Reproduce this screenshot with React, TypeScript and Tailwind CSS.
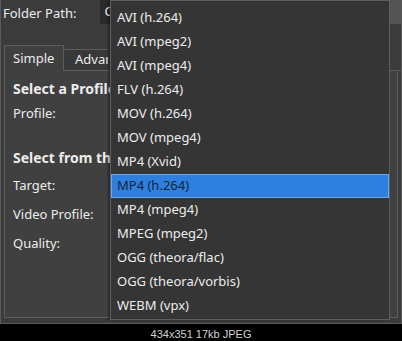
const formats = [
  'AVI (h.264)',
  'AVI (mpeg2)',
  'AVI (mpeg4)',
  'FLV (h.264)',
  'MOV (h.264)',
  'MOV (mpeg4)',
  'MP4 (Xvid)',
  'MP4 (h.264)',
  'MP4 (mpeg4)',
  'MPEG (mpeg2)',
  'OGG (theora/flac)',
  'OGG (theora/vorbis)',
  'WEBM (vpx)',
];

const selected = 'MP4 (h.264)';

export default function App() {
  return (
    <div className="flex h-[341px] w-[402px] flex-col overflow-hidden bg-black font-['Noto_Sans',sans-serif] text-[13px] text-[#ececec]">
      <div className="relative h-[324px] shrink-0 overflow-hidden border-x border-b border-[#5a5a5a] bg-[#3b3b3b]">
        {/* folder row */}
        <div className="flex h-[45px] items-start">
          <span className="ml-[2px] mt-[4px] leading-[18px]">Folder Path:</span>
          <div className="ml-[24px] flex h-[24px] flex-1 items-center bg-[#2a2a2a] pl-[4px]">C</div>
          <div className="h-[24px] w-[12px] bg-[#555]" />
        </div>

        {/* tabs */}
        <div className="flex h-[26px] items-end pl-[3px]">
          <div className="flex h-[26px] w-[60px] items-center border-x border-t border-[#5c5c5c] bg-[#404040] pl-[8px]">Simple</div>
          <div className="flex h-[22px] w-[44px] items-center overflow-hidden whitespace-nowrap border-t border-b border-[#5c5c5c] bg-[#383838] pl-[11px]">Advanced</div>
          <div className="h-px flex-1 bg-[#5c5c5c]" />
        </div>

        {/* panel */}
        <div className="mx-[3px] h-[247px] border-x border-b border-[#5c5c5c] bg-[#404040] pl-[8px] pt-[9px]">
          <div className="w-[97px] overflow-hidden whitespace-nowrap">
            <div className="text-[14px] font-bold leading-[18px]">Select a Profile</div>
            <div className="mt-[6px] leading-[18px]">Profile:</div>
            <div className="mt-[27px] text-[14px] font-bold leading-[18px]">Select from the list</div>
            <div className="mt-[9px] leading-[18px]">Target:</div>
            <div className="mt-[11px] leading-[18px]">Video Profile:</div>
            <div className="mt-[11px] leading-[18px]">Quality:</div>
          </div>
        </div>

        {/* dropdown popup */}
        <div className="absolute left-[109px] top-0 h-[320px] w-[280px] border border-[#5e5e5e] bg-[#353535] pt-[5px] shadow-[-2px_0_2px_rgba(0,0,0,0.35)]">
          {formats.map((f) => (
            <div
              key={f}
              className={
                f === selected
                  ? 'flex h-[24px] items-center border border-[#6aa8ee] bg-[#2f80de] pl-[5px] text-[#12233a]'
                  : 'flex h-[24px] items-center pl-[6px]'
              }
            >
              {f}
            </div>
          ))}
        </div>
      </div>

      <div className="flex flex-1 items-center justify-center pt-[2px] font-['Liberation_Sans',sans-serif] text-[11px] text-[#d2d2d2]">
        434x351 17kb JPEG
      </div>
    </div>
  );
}
